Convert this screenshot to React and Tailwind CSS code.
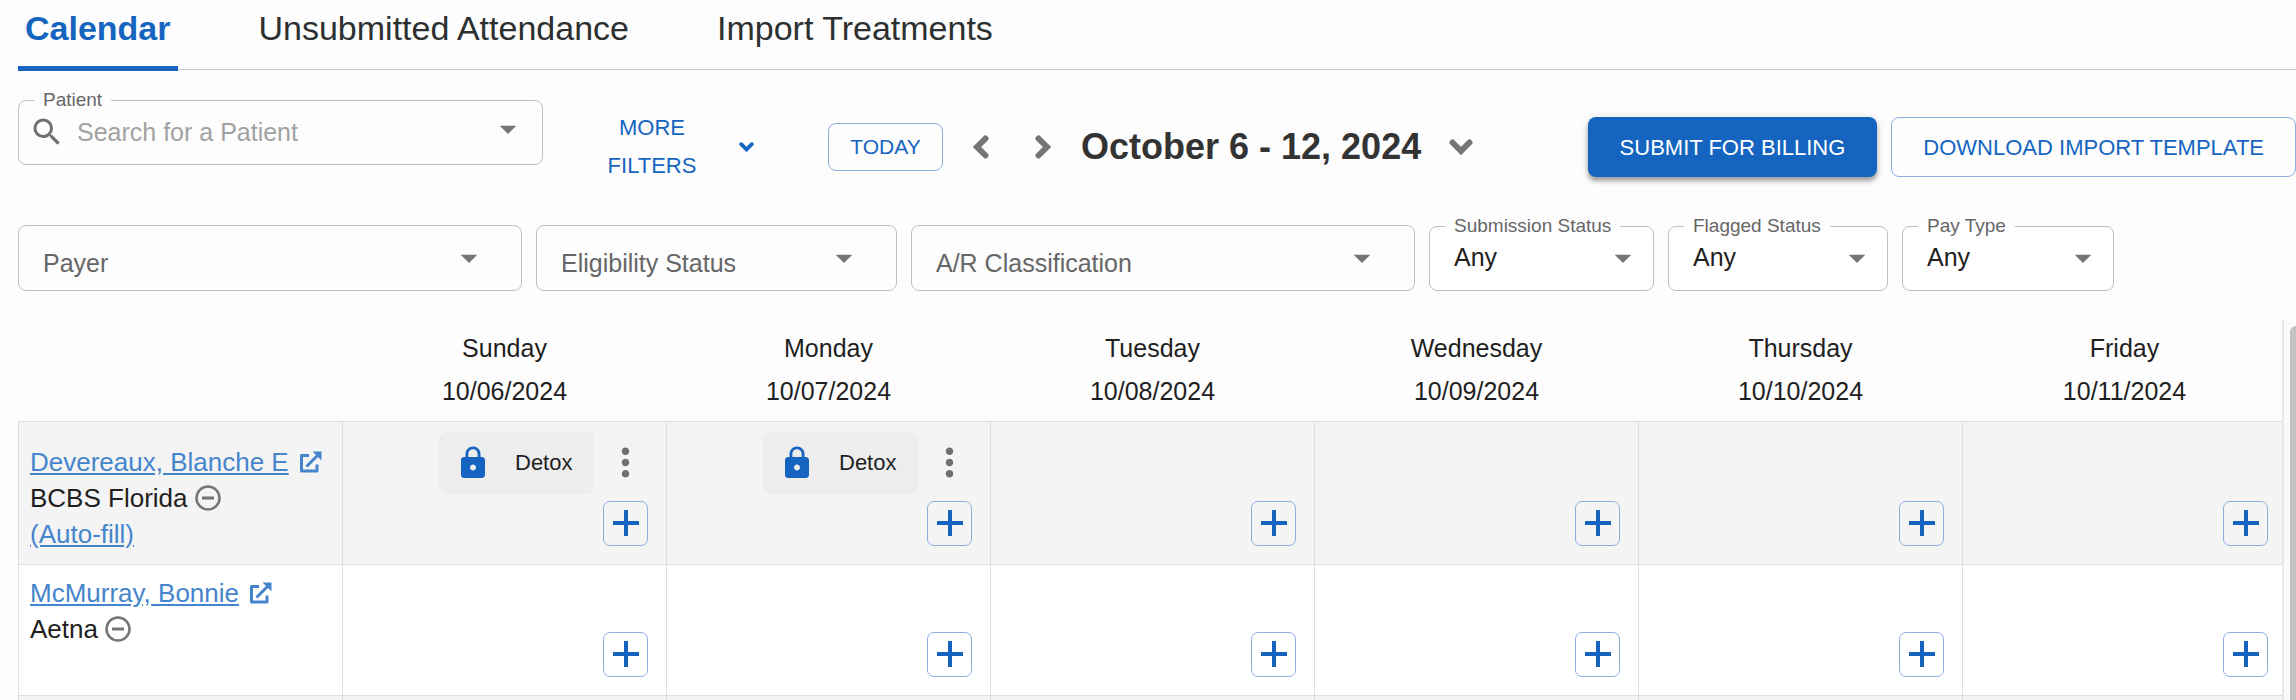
import { MdArrowDropDown, MdLock, MdMoreVert, MdSearch } from 'react-icons/md'

const TABS = ['Calendar', 'Unsubmitted Attendance', 'Import Treatments']

const DAYS = [
  { name: 'Sunday', date: '10/06/2024' },
  { name: 'Monday', date: '10/07/2024' },
  { name: 'Tuesday', date: '10/08/2024' },
  { name: 'Wednesday', date: '10/09/2024' },
  { name: 'Thursday', date: '10/10/2024' },
  { name: 'Friday', date: '10/11/2024' },
]

const PATIENTS = [
  {
    name: 'Devereaux, Blanche E',
    payer: 'BCBS Florida',
    autoFill: true,
    treatments: { Sunday: 'Detox', Monday: 'Detox' },
  },
  { name: 'McMurray, Bonnie', payer: 'Aetna', treatments: {} },
]

function App() {
  return (
    <main className="flex h-screen flex-col overflow-hidden bg-[#fdfdfd] font-['Liberation_Sans',Arial,sans-serif] text-[#1f1f1f]">
      <Tabs />
      <Toolbar />
      <Filters />
      <Calendar />
    </main>
  )
}

function Tabs() {
  return (
    <nav className="ml-[18px] flex h-[70px] shrink-0 gap-[74px] border-b border-[#c8c8c8]">
      {TABS.map((tab, i) => (
        <button
          key={tab}
          type="button"
          className={
            i === 0
              ? '-mb-[2px] h-[71px] border-b-[5px] border-[#1565c0] px-[7px] pb-[10px] text-[34px] leading-[40px] font-bold text-[#1565c0]'
              : 'h-[66px] px-[7px] pb-[10px] text-[34px] leading-[40px] text-[#2d3030]'
          }
        >
          {tab}
        </button>
      ))}
    </nav>
  )
}

function Toolbar() {
  return (
    <div className="flex h-[126px] shrink-0 items-center pt-7 pl-[18px] whitespace-nowrap">
      <Outlined label="Patient" className="-mt-[39px] w-[525px]">
        <MdSearch className="ml-[10px] size-9 shrink-0 text-[#707070]" aria-hidden="true" />
        <input
          id="Patient"
          placeholder="Search for a Patient"
          className="ml-3 min-w-0 flex-1 pt-[2px] text-[25px] outline-none placeholder:text-[#a2a2a2]"
        />
        <MdArrowDropDown
          className="mr-[14px] mb-[6px] size-10 shrink-0 text-[#757575]"
          aria-hidden="true"
        />
      </Outlined>

      <button
        type="button"
        className="ml-[62px] flex items-center gap-10 text-[22px] leading-[38px] text-[#1565c0]"
      >
        <span className="w-[94px] whitespace-normal">MORE FILTERS</span>
        <Chevron className="h-[10px] w-[15px]" />
      </button>

      <button
        type="button"
        className="ml-[74px] h-12 w-[115px] rounded-lg border border-[#8aaee0] text-[21px] text-[#1565c0]"
      >
        TODAY
      </button>
      <button type="button" aria-label="Previous week" className="ml-[26px] text-[#757575]">
        <Chevron className="h-4 w-6 rotate-90" />
      </button>
      <button type="button" aria-label="Next week" className="ml-[38px] text-[#757575]">
        <Chevron className="h-4 w-6 -rotate-90" />
      </button>
      <h1 className="ml-[26px] text-[36px] leading-[44px] font-bold text-[#333]">
        October 6 - 12, 2024
      </h1>
      <button type="button" aria-label="Pick a week" className="ml-7 text-[#757575]">
        <Chevron className="h-4 w-6" />
      </button>

      <div className="ml-auto flex gap-[14px] text-[22px]">
        <button
          type="button"
          className="h-[60px] rounded-lg bg-[#1565c0] px-8 text-white shadow-[0_4px_4px_rgba(0,0,0,0.3),0_2px_10px_rgba(0,0,0,0.15)]"
        >
          SUBMIT FOR BILLING
        </button>
        <button
          type="button"
          className="h-[60px] rounded-lg border border-[#8aaee0] px-[31px] text-[#1565c0]"
        >
          DOWNLOAD IMPORT TEMPLATE
        </button>
      </div>
    </div>
  )
}

function Filters() {
  return (
    <div className="flex shrink-0 gap-[14px] pt-5 pl-[18px]">
      <Combo label="Payer" className="w-[504px]" />
      <Combo label="Eligibility Status" className="w-[361px]" />
      <Combo label="A/R Classification" className="w-[504px]" />
      <AnySelect label="Submission Status" className="w-[225px]" />
      <AnySelect label="Flagged Status" className="w-[220px]" />
      <AnySelect label="Pay Type" className="w-[212px]" />
    </div>
  )
}

function Combo({ label, className }) {
  return (
    <div
      className={`mt-[9px] flex h-[66px] items-center rounded-lg border border-[#bfbfbf] ${className}`}
    >
      <input
        aria-label={label}
        placeholder={label}
        className="ml-6 min-w-0 flex-1 pt-3 text-[25px] outline-none placeholder:text-[#666]"
      />
      <MdArrowDropDown className="mr-8 size-10 shrink-0 text-[#757575]" aria-hidden="true" />
    </div>
  )
}

function AnySelect({ label, className }) {
  return (
    <Outlined label={label} className={`bg-white ${className}`}>
      <select
        id={label}
        className="h-full min-w-0 flex-1 appearance-none pl-6 text-[25px] outline-none"
      >
        <option>Any</option>
      </select>
      <MdArrowDropDown className="mr-[10px] size-10 shrink-0 text-[#757575]" aria-hidden="true" />
    </Outlined>
  )
}

// The legend cuts the notch into the top border for the floating label.
function Outlined({ label, className, children }) {
  return (
    <fieldset
      className={`h-[75px] shrink-0 rounded-lg border border-[#bfbfbf] ${className}`}
    >
      <legend className="ml-[15px] px-[9px] text-[19px] leading-[20px] text-[#666]">
        <label htmlFor={label}>{label}</label>
      </legend>
      <div className="-mt-[10px] flex h-[64px] items-center">{children}</div>
    </fieldset>
  )
}

function Calendar() {
  return (
    <div className="mt-[29px] ml-[18px] flex min-h-0 flex-1">
      <div className="min-w-0 flex-1 overflow-hidden">
        <table className="w-[calc(100%+5px)] table-fixed border-collapse">
          <thead>
            <tr className="h-[101px] text-[25px] leading-[43px]">
              <td />
              {DAYS.map((day) => (
                <th key={day.name} scope="col" className="font-normal">
                  {day.name}
                  <br />
                  {day.date}
                </th>
              ))}
            </tr>
          </thead>
          <tbody>
            {PATIENTS.map((patient) => (
              <PatientRow key={patient.name} patient={patient} />
            ))}
            <tr className="h-[131px] bg-[#f4f4f4]">
              <td className="border border-[#dedede]" />
              {DAYS.map((day) => (
                <td key={day.name} className="border border-[#dedede]" />
              ))}
            </tr>
          </tbody>
        </table>
      </div>
      <div className="w-[14px] border-l-2 border-[#e8e8e8] bg-[#fafafa] pt-[6px] pl-[6px]">
        <div className="h-full rounded-tl-lg bg-[#c1c1c1]" />
      </div>
    </div>
  )
}

function PatientRow({ patient }) {
  return (
    <tr className="h-[131px] odd:bg-[#f4f4f4] even:bg-white">
      <th
        scope="row"
        className="border border-[#dedede] px-[11px] pt-[10px] pb-3 text-left align-top text-[26px] leading-[36px] font-normal whitespace-nowrap"
      >
        <div className={patient.autoFill ? 'flex items-center pt-3' : 'flex items-center'}>
          <a href="#patient" className="text-[#4585cc] underline">
            {patient.name}
          </a>
          <OpenIcon />
        </div>
        <div className="flex items-center gap-[7px]">
          {patient.payer}
          <MinusCircle />
        </div>
        {patient.autoFill && (
          <a href="#auto-fill" className="text-[#4585cc] underline">
            (Auto-fill)
          </a>
        )}
      </th>
      {DAYS.map((day) => (
        <td key={day.name} className="border border-[#dedede] pr-[18px] pb-[18px] align-bottom">
          <div className="flex flex-col items-end gap-[7px]">
            {patient.treatments[day.name] && <Treatment name={patient.treatments[day.name]} />}
            <button
              type="button"
              aria-label={`Add treatment on ${day.name}`}
              className="flex size-[45px] items-center justify-center rounded-[7px] border border-[#8aaee0] text-[#1565c0]"
            >
              <svg viewBox="0 0 26 26" className="size-[26px]" aria-hidden="true">
                <path d="M13 0v26M0 13h26" stroke="currentColor" strokeWidth="4" />
              </svg>
            </button>
          </div>
        </td>
      ))}
    </tr>
  )
}

function Treatment({ name }) {
  return (
    <div className="flex items-center gap-[9px]">
      <span className="flex h-[62px] w-[155px] items-center rounded-lg bg-[#ededed] pl-4 text-[22px]">
        <MdLock className="mr-6 size-9 text-[#1565c0]" aria-hidden="true" />
        {name}
      </span>
      <button type="button" aria-label="More options" className="text-[#707070]">
        <MdMoreVert className="size-[45px]" />
      </button>
    </div>
  )
}

function Chevron({ className }) {
  return (
    <svg viewBox="0 0 24 16" className={className} fill="none" aria-hidden="true">
      <path
        d="M3.500 3.500l8.500 8.500 8.500-8.500"
        stroke="currentColor"
        strokeWidth="6"
        strokeLinecap="round"
      />
    </svg>
  )
}

function OpenIcon() {
  return (
    <svg
      viewBox="0 0 22 22"
      className="ml-[11px] size-[22px] text-[#4585cc]"
      fill="none"
      stroke="currentColor"
      strokeWidth="3"
      aria-hidden="true"
    >
      <path d="M9 4.500H1.500v15.500h15.500V13.500" strokeLinejoin="round" />
      <path d="M6.500 15.500L18 4" />
      <path d="M12.500 0.500H21.500V9.500z" fill="currentColor" stroke="none" />
    </svg>
  )
}

function MinusCircle() {
  return (
    <svg
      viewBox="0 0 26 26"
      className="size-[26px] text-[#757575]"
      fill="none"
      stroke="currentColor"
      aria-hidden="true"
    >
      <circle cx="13" cy="13" r="11.500" strokeWidth="2.500" />
      <path d="M7 13h12" strokeWidth="3" />
    </svg>
  )
}

export default App
